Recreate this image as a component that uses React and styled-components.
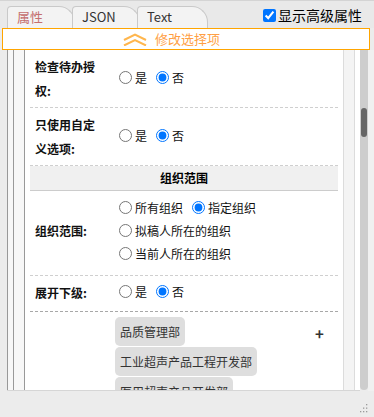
import React from "react";
import styled, { createGlobalStyle } from "styled-components";

const GlobalStyle = createGlobalStyle`
  html, body {
    margin: 0;
    padding: 0;
    background: #ececec;
  }
  body {
    font-family: "Noto Sans CJK SC", "Liberation Sans", sans-serif;
    font-size: 12px;
    color: #000;
  }
`;

const Panel = styled.div`
  width: 374px;
  height: 417px;
  box-sizing: border-box;
  border-top: 1px solid #d4d4d4;
  background: #ececec;
  display: flex;
  flex-direction: column;
  overflow: hidden;
`;

const TopBar = styled.div`
  height: 27px;
  display: flex;
  align-items: flex-end;
  padding: 0 12px 0 7px;
  background: #e9e9e9;
`;

const Tab = styled.div`
  box-sizing: border-box;
  width: ${(p) => p.$width}px;
  height: 22px;
  margin-left: ${(p) => (p.$first ? 0 : -3)}px;
  padding-left: 9px;
  border: 1px solid #c9c9c9;
  border-bottom: none;
  border-radius: 4px 16px 0 0;
  background: #f3f3f3;
  font-size: 13px;
  line-height: 20px;
  color: ${(p) => (p.$active ? "#c46f6f" : "#333")};
`;

const AdvancedToggle = styled.label`
  margin-left: auto;
  align-self: center;
  display: flex;
  align-items: center;
  font-size: 14px;
  line-height: 20px;
  margin-top: 1px;

  input {
    width: 13px;
    height: 13px;
    margin: 0 2px 0 0;
  }
`;

const ActionBar = styled.div`
  box-sizing: border-box;
  height: 22px;
  margin: 0 4px 0 2px;
  border: 1px solid #ffa500;
  background: #fff;
  display: flex;
  align-items: center;
  gap: 8px;
  padding-left: 120px;
  color: #ff9f45;
  font-size: 13px;
  line-height: 20px;
`;

const Body = styled.div`
  height: 341px;
  display: flex;
  padding-left: 7px;
`;

const Frame = styled.div`
  flex: 1;
  display: flex;
  border-bottom: 1px solid #d6d6d6;
`;

const Rail = styled.div`
  width: ${(p) => p.$width}px;
  background: ${(p) => (p.$light ? "#f4f4f4" : "#f7f7f7")};
  border-left: 1px solid ${(p) => (p.$light ? "#dcdcdc" : "#999")};
  border-right: ${(p) => (p.$closed ? `1px solid ${p.$light ? "#dcdcdc" : "#999"}` : "none")};
`;

const Gutter = styled.div`
  width: 5px;
  background: #fff;
`;

const ScrollTrack = styled.div`
  width: 8px;
  height: 340px;
  background: #cdcdcd;
  border-radius: 0 0 4px 4px;
  padding-top: 58px;
  box-sizing: border-box;
`;

const ScrollThumb = styled.div`
  width: 6px;
  height: 29px;
  margin-left: 1px;
  border-radius: 3px;
  background: #666;
`;

const Edge = styled.div`
  width: 6px;
  background: #f0f0f0;
`;

const Content = styled.div`
  flex: 1;
  background: #fff;
  padding: 0 5px;
  overflow: hidden;
`;

const Row = styled.div`
  display: grid;
  grid-template-columns: 75px 1fr 30px;
  align-items: center;
  padding: 5px 0 ${(p) => p.$bottom || 4}px;
  border-bottom: 1px dashed ${(p) => (p.$dark ? "#a8a8a8" : "#cfcfcf")};
`;

const Label = styled.div`
  padding-left: 5px;
  width: 68px;
  font-weight: bold;
  line-height: 24px;
  color: #111;
`;

const Value = styled.div`
  padding-left: 9px;
  display: flex;
  flex-direction: column;
  margin-top: ${(p) => p.$shift || 0}px;
`;

const OptionLine = styled.div`
  display: flex;
  gap: 4px;
  line-height: ${(p) => p.$line || 24}px;
`;

const Option = styled.label`
  display: inline-flex;
  align-items: center;
  font-size: 12px;
  color: #111;

  input {
    width: 13px;
    height: 13px;
    margin: 0 3px 0 5px;
  }
`;

const SectionHeader = styled.div`
  height: 24px;
  line-height: 24px;
  background: #f0f0f0;
  border-bottom: 1px solid #cccccc;
  text-align: center;
  font-weight: bold;
`;

const TagList = styled.div`
  grid-column: 2;
  padding-left: 10px;
  display: flex;
  flex-direction: column;
  align-items: flex-start;
  gap: 1px;
`;

const Tag = styled.span`
  height: 29px;
  line-height: 29px;
  padding: 0 5px;
  border-radius: 5px;
  background: #dedede;
  color: #333;
  font-size: 12px;
`;

const AddButton = styled.span`
  align-self: start;
  margin-top: 7px;
  padding-left: 7px;
  font-size: 15px;
  font-weight: bold;
  color: #333;
  line-height: 20px;
`;

const TagRow = styled.div`
  display: grid;
  grid-template-columns: 75px 1fr 30px;
  padding-top: 5px;
`;

const Footer = styled.div`
  flex: 1;
  display: flex;
  justify-content: flex-end;
  align-items: flex-end;
  padding: 0 6px 4px 0;
`;

const ChevronsUp = () => (
  <svg width="24" height="13" viewBox="0 0 24 13" fill="none" stroke="#ffb64d" strokeWidth="2">
    <path d="M1 7 L12 1.5 L23 7" />
    <path d="M1 12.5 L12 7 L23 12.5" />
  </svg>
);

const Grip = () => (
  <svg width="8" height="9" viewBox="0 0 8 9" fill="#9a9a9a">
    <rect x="6" y="0" width="1.3" height="1.3" />
    <rect x="6" y="3.5" width="1.3" height="1.3" />
    <rect x="3" y="3.5" width="1.3" height="1.3" />
    <rect x="6" y="7" width="1.3" height="1.3" />
    <rect x="3" y="7" width="1.3" height="1.3" />
    <rect x="0" y="7" width="1.3" height="1.3" />
  </svg>
);

const YesNo = ({ name, value }) => (
  <Value $shift={-3}>
    <OptionLine>
      <Option>
        <input type="radio" name={name} defaultChecked={value} />是
      </Option>
      <Option>
        <input type="radio" name={name} defaultChecked={!value} />否
      </Option>
    </OptionLine>
  </Value>
);

export default function App() {
  return (
    <>
      <GlobalStyle />
      <Panel>
        <TopBar>
          <Tab $first $active $width={68}>属性</Tab>
          <Tab $width={68}>JSON</Tab>
          <Tab $width={71}>Text</Tab>
          <AdvancedToggle>
            <input type="checkbox" defaultChecked />
            显示高级属性
          </AdvancedToggle>
        </TopBar>
        <ActionBar>
          <ChevronsUp />
          修改选择项
        </ActionBar>
        <Body>
          <Frame>
            <Rail $width={5} />
            <Rail $width={10} $closed />
            <Content>
              <Row>
                <Label>检查待办授权:</Label>
                <YesNo name="todo" value={false} />
              </Row>
              <Row>
                <Label>只使用自定义选项:</Label>
                <YesNo name="custom" value={false} />
              </Row>
              <SectionHeader>组织范围</SectionHeader>
              <Row $bottom={10}>
                <Label>组织范围:</Label>
                <Value>
                  <OptionLine $line={23}>
                    <Option>
                      <input type="radio" name="scope" />所有组织
                    </Option>
                    <Option>
                      <input type="radio" name="scope" defaultChecked />指定组织
                    </Option>
                  </OptionLine>
                  <OptionLine $line={23}>
                    <Option>
                      <input type="radio" name="scope" />拟稿人所在的组织
                    </Option>
                  </OptionLine>
                  <OptionLine $line={23}>
                    <Option>
                      <input type="radio" name="scope" />当前人所在的组织
                    </Option>
                  </OptionLine>
                </Value>
              </Row>
              <Row $dark $bottom={6}>
                <Label>展开下级:</Label>
                <YesNo name="expand" value={false} />
              </Row>
              <TagRow>
                <TagList>
                  <Tag>品质管理部</Tag>
                  <Tag>工业超声产品工程开发部</Tag>
                  <Tag>医用超声产品开发部</Tag>
                </TagList>
                <AddButton>+</AddButton>
              </TagRow>
            </Content>
            <Rail $width={10} $light $closed />
            <Gutter />
          </Frame>
          <ScrollTrack>
            <ScrollThumb />
          </ScrollTrack>
          <Edge />
        </Body>
        <Footer>
          <Grip />
        </Footer>
      </Panel>
    </>
  );
}
